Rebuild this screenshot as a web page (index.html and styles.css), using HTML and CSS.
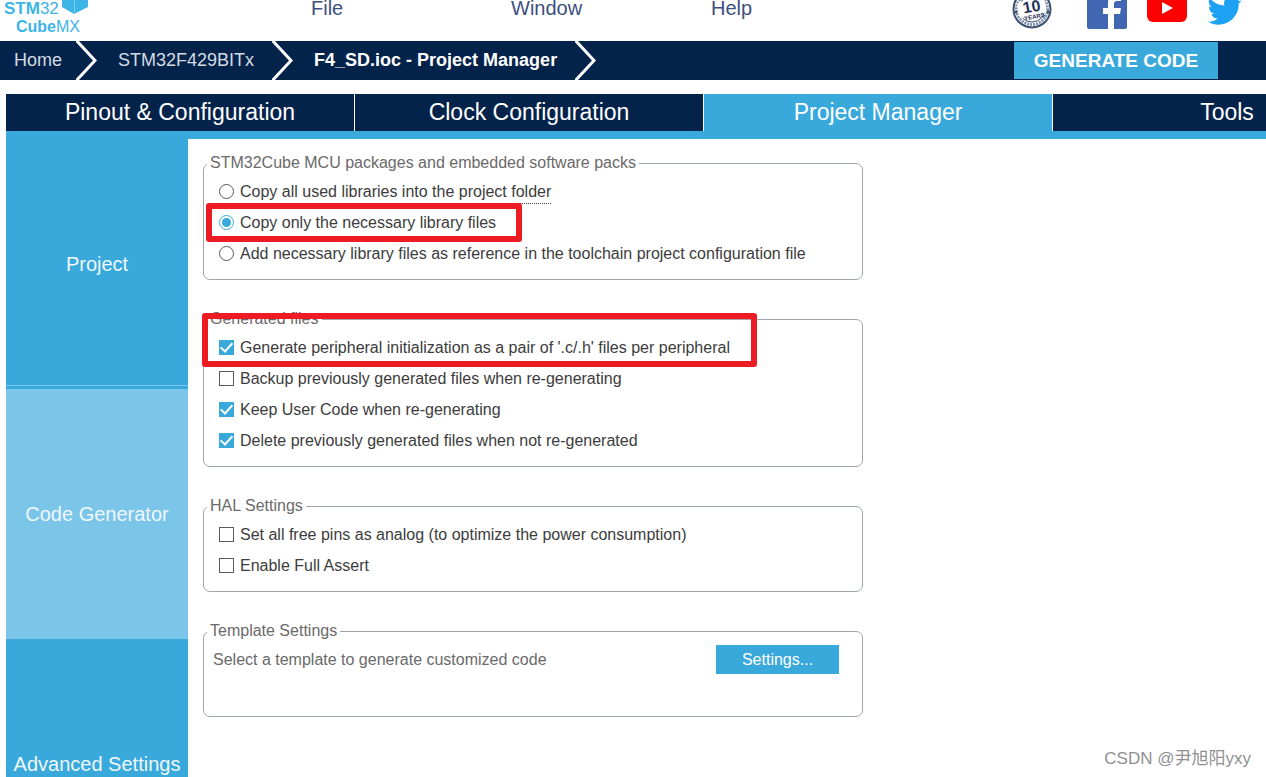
FILE: index.html
```
<!DOCTYPE html>
<html lang="en">
	<head>
		<meta charset="utf-8">
		<title>STM32CubeMX</title>
		<link rel="stylesheet" href="styles.css">
	</head>
	<body>
		<header class="header">
			<div class="logo">
				<div class="logo-top"><b>STM</b>32
					<svg class="logo-cube" width="27" height="18" viewBox="0 0 27 18">
						<path fill="#3cb4e6" d="M0 0H26V10L12 17L0 10Z"/>
						<path stroke="#7fcdf0" d="M12.500 3V16"/>
					</svg>
				</div>
				<div class="logo-bottom"><b>Cube</b>MX</div>
			</div>
			<nav class="menu">
				<button class="menu-item">File</button>
				<button class="menu-item">Window</button>
				<button class="menu-item">Help</button>
			</nav>
			<div class="social">
				<a class="social-seal" href="#" aria-label="10 years">
					<svg width="40" height="40" viewBox="0 0 40 40">
						<circle cx="20" cy="20" r="18.500" fill="#fff" stroke="#3b4f70" stroke-width="2"/>
						<circle cx="20" cy="20" r="15.500" fill="none" stroke="#8090a8" stroke-width="3" stroke-dasharray="2 1"/>
						<circle cx="20" cy="20" r="13" fill="#fff" stroke="#3b4f70"/>
						<g transform="rotate(-10 20 20)">
							<rect x="6" y="11" width="28" height="16" rx="4" fill="#fff"/>
							<text class="seal-number" x="20" y="23" text-anchor="middle">10</text>
							<text class="seal-years" x="21" y="30" text-anchor="middle">YEARS</text>
						</g>
						<circle cx="4" cy="23" r="1.500" fill="#3b4f70"/>
						<circle cx="36" cy="23" r="1.500" fill="#3b4f70"/>
					</svg>
				</a>
				<a href="#" aria-label="Facebook">
					<svg width="40" height="40" viewBox="0 0 40 40">
						<rect width="40" height="40" rx="2" fill="#4267b2"/>
						<path fill="#fff" d="M21 40V25H16V19H21V14Q21 6 29 6H34V12H30Q27 12 27 15V19H34L33 25H27V40Z"/>
					</svg>
				</a>
				<a href="#" aria-label="YouTube">
					<svg width="40" height="40" viewBox="0 0 40 40">
						<rect y="5" width="40" height="28" rx="6" fill="#f00"/>
						<path fill="#fff" d="M15 13L26 19L15 25Z"/>
					</svg>
				</a>
				<a href="#" aria-label="Twitter">
					<svg width="40" height="40" viewBox="2 -0.500 23 23">
						<path fill="#1da1f2" d="M22 5.900a8 8 0 0 1-2.300.6 4 4 0 0 0 1.700-2.200 8 8 0 0 1-2.500 1 4 4 0 0 0-6.900 3.700A11.500 11.500 0 0 1 3.600 4.700a4 4 0 0 0 1.300 5.400 4 4 0 0 1-1.800-.5 4 4 0 0 0 3.200 4 4 4 0 0 1-1.800.1 4 4 0 0 0 3.800 2.800 8.200 8.200 0 0 1-6 1.700 11.600 11.600 0 0 0 17.900-10.300A8 8 0 0 0 22 5.900z"/>
					</svg>
				</a>
			</div>
		</header>

		<div class="breadcrumb">
			<a class="crumb" href="#">Home</a>
			<svg class="crumb-arrow" width="21" height="39" viewBox="0 0 21 39"><path d="M0 -1L19 19.500L0 40"/></svg>
			<a class="crumb crumb-device" href="#">STM32F429BITx</a>
			<svg class="crumb-arrow" width="21" height="39" viewBox="0 0 21 39"><path d="M0 -1L19 19.500L0 40"/></svg>
			<a class="crumb crumb-active" href="#">F4_SD.ioc - Project Manager</a>
			<svg class="crumb-arrow" width="21" height="39" viewBox="0 0 21 39"><path d="M0 -1L19 19.500L0 40"/></svg>
			<button class="generate">GENERATE CODE</button>
		</div>

		<nav class="tabs">
			<button class="tab">Pinout &amp; Configuration</button>
			<button class="tab">Clock Configuration</button>
			<button class="tab tab-active">Project Manager</button>
			<button class="tab">Tools</button>
		</nav>

		<div class="content">
			<nav class="sidebar">
				<button class="side-item side-first">Project</button>
				<button class="side-item side-active">Code Generator</button>
				<button class="side-item">Advanced Settings</button>
			</nav>
			<main class="panel">
				<fieldset class="group">
					<legend>STM32Cube MCU packages and embedded software packs</legend>
					<label class="option"><input type="radio" name="packs"><span>Copy all used libraries into the project <span class="dotted">folder</span></span></label>
					<label class="option"><input type="radio" name="packs" checked>Copy only the necessary library files</label>
					<label class="option"><input type="radio" name="packs">Add necessary library files as reference in the toolchain project configuration file</label>
					<div class="mark mark-library"></div>
				</fieldset>
				<fieldset class="group">
					<legend>Generated files</legend>
					<label class="option"><input type="checkbox" checked>Generate peripheral initialization as a pair of '.c/.h' files per peripheral</label>
					<label class="option"><input type="checkbox">Backup previously generated files when re-generating</label>
					<label class="option"><input type="checkbox" checked>Keep User Code when re-generating</label>
					<label class="option"><input type="checkbox" checked>Delete previously generated files when not re-generated</label>
					<div class="mark mark-peripheral"></div>
				</fieldset>
				<fieldset class="group">
					<legend>HAL Settings</legend>
					<label class="option"><input type="checkbox">Set all free pins as analog (to optimize the power consumption)</label>
					<label class="option"><input type="checkbox">Enable Full Assert</label>
				</fieldset>
				<fieldset class="group">
					<legend>Template Settings</legend>
					<div class="template">
						<span>Select a template to generate customized code</span>
						<button class="settings">Settings...</button>
					</div>
				</fieldset>
			</main>
		</div>
		<div class="watermark">CSDN @尹旭阳yxy</div>
	</body>
</html>
```
FILE: styles.css
```
*
{
	box-sizing: border-box;
}
body
{
	display: flex;
	flex-direction: column;
	height: 100vh;
	margin: 0;
	overflow: hidden;
	position: relative;
	background-color: white;
	font-family: "Liberation Sans", Arial, sans-serif;
	font-size: 16px;
	color: #3c3c3c;
}
button
{
	border: none;
	padding: 0;
	font-family: inherit;
	cursor: pointer;
}
a
{
	text-decoration: none;
}

/* top bar */
.header
{
	display: flex;
	align-items: flex-end;
	flex-shrink: 0;
	height: 41px;
	overflow: hidden;
}
.logo
{
	width: 311px;
	padding: 0 0 5px 4px;
	color: #3cb4e6;
	font-size: 17px;
	line-height: 18px;
}
.logo-top
{
	display: flex;
	align-items: flex-start;
	height: 18px;
}
.logo-cube
{
	margin-left: 3px;
	margin-top: -3px;
}
.logo-bottom
{
	padding-left: 12px;
	font-size: 16px;
}
.menu
{
	display: flex;
	flex: 1;
	padding-bottom: 23px;
}
.menu-item
{
	width: 200px;
	background: none;
	color: #3d4f7f;
	font-size: 20px;
	line-height: 20px;
	text-align: left;
}
.social
{
	display: flex;
	gap: 20px;
	padding: 0 19px 12px 0;
}
.social svg
{
	display: block;
}
.social-seal
{
	margin-right: 15px;
}
.seal-number
{
	fill: #1d3258;
	font-size: 16px;
	font-weight: bold;
}
.seal-years
{
	fill: #1d3258;
	font-size: 6px;
	font-weight: bold;
}

/* breadcrumb */
.breadcrumb
{
	display: flex;
	align-items: center;
	flex-shrink: 0;
	height: 39px;
	padding: 0 48px 0 14px;
	background-color: #03234b;
}
.crumb
{
	color: #d5dbe3;
	font-size: 18px;
	padding-right: 14px;
	white-space: nowrap;
}
.crumb-device
{
	padding-right: 18px;
}
.crumb-active
{
	color: white;
	font-weight: bold;
	padding-right: 18px;
}
.crumb-arrow
{
	margin-right: 21px;
	fill: none;
	stroke: white;
	stroke-width: 3px;
}
.generate
{
	width: 204px;
	height: 37px;
	margin-left: auto;
	background-color: #39a9dc;
	color: white;
	font-size: 19px;
	font-weight: bold;
}

/* main tabs */
.tabs
{
	display: grid;
	grid-template-columns: repeat(4, 348px);
	gap: 1px;
	flex-shrink: 0;
	margin: 14px 0 0 6px;
	border-bottom: 8px solid #39a9dc;
	overflow: hidden;
}
.tab
{
	height: 37px;
	background-color: #03234b;
	color: white;
	font-size: 23px;
}
.tab-active
{
	background-color: #39a9dc;
}

/* sidebar and panel */
.content
{
	display: flex;
	flex: 1;
	min-height: 0;
	padding-left: 6px;
	overflow: hidden;
}
.sidebar
{
	width: 182px;
	flex-shrink: 0;
}
.side-item
{
	display: block;
	width: 100%;
	height: 250px;
	background-color: #39a9dc;
	color: #eef8fd;
	font-size: 20px;
}
.side-first
{
	background-image: linear-gradient(#7bc5e9, #7bc5e9);
	background-size: 100% 1px;
	background-position: 0 246px;
	background-repeat: no-repeat;
}
.side-active
{
	background-color: #7bc5e9;
}
.panel
{
	flex: 1;
	padding: 15px 16px 0 15px;
}
.group
{
	position: relative;
	max-width: 660px;
	min-width: 0;
	margin: 0 0 30px 0;
	padding: 4px 15px 10px 15px;
	border: 1px solid #a0a5a9;
	border-radius: 7px;
}
.group legend
{
	margin-left: -12px;
	padding: 0 3px;
	color: #6a6a6a;
	line-height: 18px;
}
.option
{
	display: flex;
	align-items: center;
	gap: 6px;
	height: 31px;
}
.option input
{
	appearance: none;
	display: flex;
	align-items: center;
	justify-content: center;
	flex-shrink: 0;
	width: 15px;
	height: 15px;
	margin: 0;
	border: 1px solid #5a5a5a;
	background-color: white;
}
.option input[type="radio"]
{
	border-radius: 50%;
}
.option input[type="radio"]:checked
{
	border-color: #39a9dc;
}
.option input[type="radio"]:checked::before
{
	content: "";
	width: 9px;
	height: 9px;
	border-radius: 50%;
	background-color: #39a9dc;
}
.option input[type="checkbox"]:checked
{
	border-color: #39a9dc;
	background-color: #39a9dc;
}
.option input[type="checkbox"]:checked::before
{
	content: "";
	width: 5px;
	height: 10px;
	margin-bottom: 3px;
	border: solid white;
	border-width: 0 2px 2px 0;
	transform: rotate(42deg);
}
.dotted
{
	padding-bottom: 3px;
	border-bottom: 1px dotted #3c3c3c;
}
.template
{
	display: flex;
	justify-content: space-between;
	height: 62px;
	padding: 1px 8px 0 0;
	margin-left: -6px;
	color: #6a6a6a;
	line-height: 29px;
}
.settings
{
	width: 123px;
	height: 29px;
	background-color: #39a9dc;
	color: white;
	font-size: 16px;
}

/* red frames over the options */
.mark
{
	position: absolute;
	border: 6px solid #ed1c24;
	border-radius: 3px;
	pointer-events: none;
}
.mark-library
{
	left: 2px;
	top: 31px;
	width: 316px;
	height: 39px;
}
.mark-peripheral
{
	left: -2px;
	top: -15px;
	width: 555px;
	height: 54px;
}
.watermark
{
	position: absolute;
	right: 15px;
	bottom: 8px;
	color: #909090;
	font-family: "Liberation Sans", "Noto Sans CJK SC", sans-serif;
	font-size: 17px;
}
```
